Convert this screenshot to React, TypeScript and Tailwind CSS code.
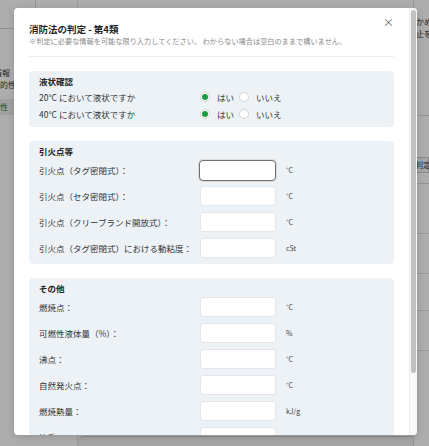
const JP = "font-['Noto_Sans_CJK_JP','Noto_Sans',sans-serif]"

const FLASH = [
  { label: '引火点（タグ密閉式）：', unit: '°C', focused: true },
  { label: '引火点（セタ密閉式）：', unit: '°C' },
  { label: '引火点（クリーブランド開放式）：', unit: '°C' },
  { label: '引火点（タグ密閉式）における動粘度：', unit: 'cSt' },
]

const OTHER = [
  { label: '燃焼点：', unit: '°C' },
  { label: '可燃性液体量（%）：', unit: '%' },
  { label: '沸点：', unit: '°C' },
  { label: '自然発火点：', unit: '°C' },
  { label: '燃焼熱量：', unit: 'kJ/g' },
  { label: '比重：', unit: '' },
]

function Radio({ checked }: { checked?: boolean }) {
  return (
    <span className="w-[10px] h-[10px] rounded-full border border-[#d4d4d4] bg-white flex items-center justify-center shrink-0">
      {checked && <span className="w-[6px] h-[6px] rounded-full bg-[#1a9c3e]" />}
    </span>
  )
}

function YesNo({ label }: { label: string }) {
  return (
    <div className="flex items-center h-[14px]">
      <span className="w-[161px] shrink-0">{label}</span>
      <Radio checked />
      <span className="ml-[7px]">はい</span>
      <span className="ml-[5px]"><Radio /></span>
      <span className="ml-[7px]">いいえ</span>
    </div>
  )
}

function Field({ label, unit, focused }: { label: string; unit: string; focused?: boolean }) {
  return (
    <div className="flex items-center h-[20px]">
      <span className="w-[161px] shrink-0 whitespace-nowrap">{label}</span>
      <input
        className={focused
          ? 'w-[77px] h-[21px] -ml-[1px] rounded-[4px] border border-[#6f6f6f] bg-white shadow-[0_0_0_1px_#d9d9d9] outline-none'
          : 'w-[76px] h-[20px] rounded-[3px] border border-[#e3e6ea] bg-white outline-none'}
      />
      <span className="ml-[10px] text-[7px] text-[#444]">{unit}</span>
    </div>
  )
}

function Section({ title, children, gap }: { title: string; children: React.ReactNode; gap: string }) {
  return (
    <div className="rounded-[4px] bg-[#edf2f7] px-[10px] pt-[5px] pb-[6px]">
      <div className="text-[8.5px] leading-[10px] font-bold text-[#222] mb-[4px]">{title}</div>
      <div className={`flex flex-col ${gap}`}>{children}</div>
    </div>
  )
}

export default function App() {
  return (
    <div className={`relative w-[429px] h-[446px] overflow-hidden bg-white ${JP}`}>
      {/* page behind the dialog */}
      <div className="flex h-full">
        <div className="w-[78px] shrink-0 border-r border-[#e5e5e5]">
          <div className="h-[29px] border-b border-[#d0d0d0] flex">
            <div className="w-[36px] border-r border-[#d6d6d6]" />
          </div>
          <div className="mt-[38px] flex flex-col text-[8px] text-[#333] whitespace-nowrap">
            <div className="h-[12px] leading-[12px] -ml-[6px]">情報</div>
            <div className="h-[12px] leading-[12px]">的性</div>
            <div className="h-[8px]" />
            <div className="h-[16px] leading-[16px] bg-[#eeeeee] text-[#1a7f37]">性</div>
          </div>
        </div>
        <div className="flex-1 flex flex-col">
          <div className="flex-1" />
          <div className="h-[10px] border-t border-[#d0d0d0] bg-[#f3f3f3] rounded-tl-[6px]" />
        </div>
        <div className="w-[16px] shrink-0 flex flex-col text-[8px] text-[#333] border-l border-[#dddddd] whitespace-nowrap">
          <div className="mt-[16px] leading-[12px] pl-[2px]">かめ</div>
          <div className="leading-[12px] pl-[2px]">止を</div>
          <div className="mt-[75px] border-t border-[#d8d8d8]" />
          <div className="mt-[41px] h-[16px] border border-[#cccccc] bg-[#f5f5f5] leading-[14px]">判定</div>
          <div className="mt-[10px] border-t border-[#d8d8d8]" />
          <div className="mt-[49px] border-t border-[#e0e0e0]" />
          <div className="mt-[39px] border-t border-[#e0e0e0]" />
          <div className="mt-[36px] border-t border-[#e0e0e0]" />
          <div className="mt-[39px] border-t border-[#e0e0e0]" />
        </div>
      </div>

      {/* overlay + dialog */}
      <div className="absolute inset-0 bg-black/[0.32] pl-[14px] pt-[8px]">
        <div className="relative w-[403px] h-[427px] bg-white rounded-[4px] shadow-[0_2px_8px_rgba(0,0,0,0.15)] overflow-hidden">
          <div className="h-full mr-[8px] overflow-hidden">
            <div className="px-[15px] pt-[15px] pb-[15px] text-[8.5px] text-[#333]">
              <div className="flex items-start justify-between">
                <div>
                  <div className="text-[9.5px] leading-[13px] font-bold text-[#1f1f1f]">消防法の判定 - 第4類</div>
                  <div className="text-[7.2px] leading-[10px] text-[#8a8a8a] whitespace-nowrap">
                    ※判定に必要な情報を可能な限り入力してください。 わからない場合は空白のままで構いません。
                  </div>
                </div>
                <button className="-mt-[6px] text-[11px] leading-none text-[#666]">×</button>
              </div>

              <div className="mt-[10px] border-t border-[#eeeeee]" />

              <div className="mt-[14px] flex flex-col gap-[14px]">
                <Section title="液状確認" gap="gap-[3px]">
                  <YesNo label="20°C において液状ですか" />
                  <YesNo label="40°C において液状ですか" />
                </Section>

                <Section title="引火点等" gap="gap-[6px]">
                  {FLASH.map(f => <Field key={f.label} {...f} />)}
                </Section>

                <Section title="その他" gap="gap-[6px]">
                  {OTHER.map(f => <Field key={f.label} {...f} />)}
                </Section>
              </div>

              <div className="mt-[14px] flex justify-end gap-[8px]">
                <button className="h-[24px] px-[12px] rounded-[4px] border border-[#d0d0d0] text-[8px]">キャンセル</button>
                <button className="h-[24px] px-[12px] rounded-[4px] bg-[#1a9c3e] text-white text-[8px]">判定する</button>
              </div>
            </div>
          </div>

          {/* scrollbar */}
          <div className="absolute right-0 top-0 bottom-0 w-[8px] bg-[#f8f8f8] border-l border-[#ededed]">
            <div className="absolute top-[2px] left-[1px] right-[1px] h-[363px] rounded-full bg-[#c1c1c1]" />
          </div>
        </div>
      </div>
    </div>
  )
}
